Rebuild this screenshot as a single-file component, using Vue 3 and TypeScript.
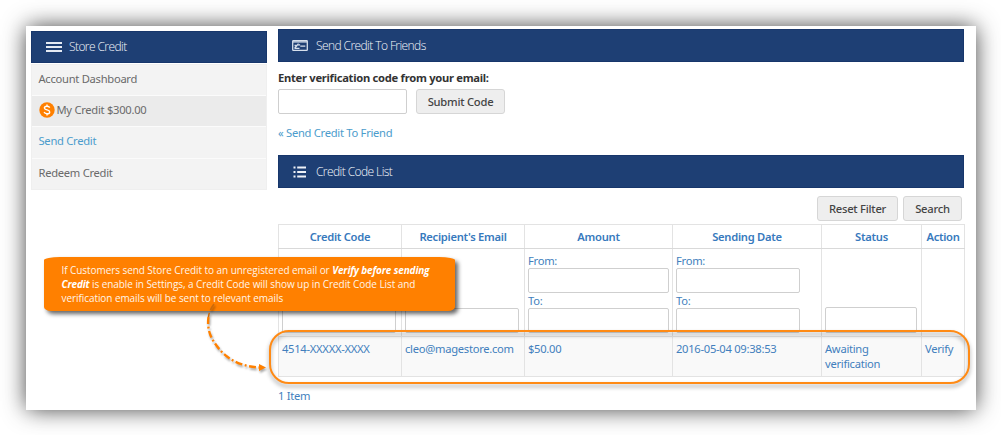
<script setup lang="ts">
interface MenuItem {
  label: string
  kind?: 'credit' | 'current'
}

interface Column {
  title: string
  filter: 'text' | 'range' | 'select' | 'none'
  value: string
}

const menu: MenuItem[] = [
  { label: 'Account Dashboard' },
  { label: 'My Credit $300.00', kind: 'credit' },
  { label: 'Send Credit', kind: 'current' },
  { label: 'Redeem Credit' },
]

const columns: Column[] = [
  { title: 'Credit Code', filter: 'text', value: '4514-XXXXX-XXXX' },
  { title: "Recipient's Email", filter: 'text', value: 'cleo@magestore.com' },
  { title: 'Amount', filter: 'range', value: '$50.00' },
  { title: 'Sending Date', filter: 'range', value: '2016-05-04 09:38:53' },
  { title: 'Status', filter: 'select', value: 'Awaiting verification' },
  { title: 'Action', filter: 'none', value: 'Verify' },
]
</script>

<template>
  <div class="stage">
    <div class="card">
      <aside class="sidebar">
        <h2 class="bar side-bar">
          <svg class="bar-icon" width="16" height="10" viewBox="0 0 16 10">
            <path d="M0 1h16M0 5h16M0 9h16" stroke="#e4eaf3" stroke-width="1.8" />
          </svg>
          <span>Store Credit</span>
        </h2>
        <ul class="menu">
          <li v-for="item in menu" :key="item.label" :class="item.kind">
            <svg v-if="item.kind === 'credit'" class="coin" width="16" height="16" viewBox="0 0 16 16">
              <circle cx="8" cy="8" r="7.700" fill="#ff8000" />
              <path d="M10.700 5.600C10.200 4.600 9.200 4.200 8 4.200c-1.500 0-2.600.7-2.600 1.800C5.400 8.500 10.700 7.300 10.700 9.900c0 1.200-1.100 1.900-2.700 1.900-1.400 0-2.500-.6-2.900-1.700M8 2.500v1.700M8 11.800v1.700" fill="none" stroke="#fff" stroke-width="1.400" />
            </svg>
            <span>{{ item.label }}</span>
          </li>
        </ul>
      </aside>

      <main class="main">
        <h2 class="bar">
          <svg class="bar-icon" width="16" height="11" viewBox="0 0 16 11">
            <rect x=".7" y=".7" width="14.600" height="9.600" rx=".6" fill="none" stroke="#d6dfec" stroke-width="1.300" />
            <path d="M1 1.900h14" stroke="#d6dfec" stroke-width="1.300" />
            <path d="M2.500 8.500 6.500 3.700M2.500 5.500h3M3.500 8.300h4M8.300 6.200h5M6.500 5.500 8 4.500" fill="none" stroke="#d6dfec" stroke-width="1.300" />
          </svg>
          <span>Send Credit To Friends</span>
        </h2>
        <label class="verify-label" for="code">Enter verification code from your email:</label>
        <div class="verify">
          <input id="code" type="text" />
          <button type="button" class="submit">Submit Code</button>
        </div>
        <a class="back">« Send Credit To Friend</a>

        <h2 class="bar list-bar">
          <svg class="bar-icon" width="16" height="12" viewBox="0 0 16 12">
            <path d="M1.500 1.500h2M5.200 1.500H14M1.500 6h2M5.200 6H14M1.500 10.500h2M5.200 10.500H14" stroke="#eef2f8" stroke-width="2" />
          </svg>
          <span>Credit Code List</span>
        </h2>
        <div class="actions">
          <button type="button" class="reset">Reset Filter</button>
          <button type="button" class="search">Search</button>
        </div>
        <table>
          <colgroup>
            <col v-for="(c, i) in columns" :key="c.title" :class="`c${i}`" />
          </colgroup>
          <thead>
            <tr>
              <th v-for="c in columns" :key="c.title">{{ c.title }}</th>
            </tr>
          </thead>
          <tbody>
            <tr class="filters">
              <td v-for="(c, i) in columns" :key="c.title">
                <div v-if="c.filter === 'range'" :class="['range', `range${i}`]">
                  <span>From:</span>
                  <input type="text" />
                  <span>To:</span>
                  <input type="text" />
                </div>
                <input v-else-if="c.filter !== 'none'" type="text" :class="c.filter" />
              </td>
            </tr>
            <tr class="entry">
              <td v-for="c in columns" :key="c.title">{{ c.value }}</td>
            </tr>
          </tbody>
        </table>
        <p class="count">1 Item</p>
      </main>
    </div>

    <div class="highlight"></div>
    <div class="callout">
      If Customers send Store Credit to an unregistered email or <b>Verify before sending</b><br />
      <b>Credit</b> is enable in Settings, a Credit Code will show up in Credit Code List and<br />
      verification emails will be sent to relevant emails
    </div>
    <svg class="arrow" width="80" height="90" viewBox="0 0 80 90">
      <path d="M19 4C16 8 14 12 13.500 17" fill="none" stroke="#c96a0c" stroke-width="1.500" stroke-dasharray="7 3" />
      <path d="M13.500 17C12 28 15 36 19 42C28 56 41 66 64 67.500" fill="none" stroke="#ff8000" stroke-width="2.400" stroke-dasharray="7 2.500 2 2.500" />
      <path d="M64 64 71 67.500 64 71Z" fill="#ff8000" />
    </svg>
  </div>
</template>

<style>
body {
  background: #fff;
  overflow: hidden;
}
</style>

<style scoped>
* {
  box-sizing: border-box;
}

.stage {
  position: relative;
  width: 1001px;
  height: 435px;
  padding: 26px 25px 25px 26px;
  overflow: hidden;
  background: #fff;
  font: 11.200px/16px "Noto Sans", "Open Sans", sans-serif;
  letter-spacing: -0.28px;
  color: #6a6a6a;
}

.card {
  display: flex;
  gap: 11px;
  width: 950px;
  height: 384px;
  padding: 3px 12px 0 5px;
  background: #fff;
  box-shadow: 0 0 22px -1px rgba(0, 0, 0, 0.78);
}

.sidebar {
  width: 236px;
  padding-top: 2px;
}

.main {
  width: 686px;
}

.bar {
  display: flex;
  align-items: center;
  gap: 7px;
  height: 32px;
  margin: 0;
  padding-left: 14px;
  background: #1e3f74;
  border: 1px solid #17366b;
  color: #f4f7fb;
  font: 300 12px/16px "Open Sans", "Noto Sans", sans-serif;
  letter-spacing: -0.58px;
  white-space: nowrap;
}

.main .bar {
  height: 33px;
  padding-left: 13px;
  gap: 8px;
}

.bar-icon {
  flex: none;
}

.menu {
  list-style: none;
  margin: 1px 0 0;
  padding: 0;
  border: 1px solid #efefef;
}

.menu li {
  display: flex;
  align-items: center;
  gap: 2px;
  height: 31.200px;
  padding: 0 7px 2px 6.500px;
  background: #f3f3f3;
  border-bottom: 1px solid #fbfbfb;
  white-space: nowrap;
}

.menu li:last-child {
  height: 30.400px;
  border-bottom: 0;
}

.menu .credit {
  background: #ebebeb;
}

.menu .current {
  color: #4b9ccc;
}

.coin {
  flex: none;
}

.verify-label {
  display: block;
  margin-top: 8px;
  color: #333;
  font-weight: 700;
  white-space: nowrap;
}

input {
  display: block;
  height: 25px;
  padding: 0;
  background: #fff;
  border: 1px solid #cfcfcf;
  border-radius: 2px;
  outline: 0;
}

button {
  height: 25px;
  padding: 0;
  background: #eee;
  border: 1px solid #d6d6d6;
  border-radius: 3px;
  color: #444;
  font: 500 11.200px/16px "Noto Sans", "Open Sans", sans-serif;
  letter-spacing: -0.23px;
  white-space: nowrap;
}

.verify {
  display: flex;
  gap: 9px;
  margin-top: 3px;
}

.verify input {
  width: 129px;
}

.submit {
  width: 89px;
}

.back {
  display: block;
  margin-top: 11px;
  color: #4b9ccc;
}

.main .list-bar {
  height: 33px;
  margin-top: 14px;
}

.actions {
  display: flex;
  justify-content: flex-end;
  gap: 5px;
  margin-top: 8px;
  padding-right: 2px;
}

.reset {
  width: 81px;
}

.search {
  width: 59px;
}

table {
  width: 686px;
  margin-top: 3px;
  border-collapse: collapse;
  table-layout: fixed;
  color: #427fbd;
}

.c0 { width: 123px; }
.c1 { width: 123px; }
.c2 { width: 148px; }
.c3 { width: 149px; }
.c4 { width: 100px; }
.c5 { width: 43px; }

th,
td {
  padding: 0 4px 0 3px;
  border: 1px solid #e3e3e3;
}

th {
  height: 24px;
  padding: 0;
  border-bottom-color: #d9d9d9;
  color: #3779bd;
  font-weight: 600;
  white-space: nowrap;
}

.filters td {
  height: 88px;
  padding-bottom: 3px;
  vertical-align: bottom;
}

.filters td > input {
  width: 114px;
}

.filters td > .select {
  width: 92px;
  height: 26px;
}

.range span {
  display: block;
  height: 15px;
  line-height: 15px;
}

.range input {
  width: 141px;
}

.range3 input {
  width: 124px;
}

.entry td {
  height: 40px;
  padding-top: 4px;
  background: #f9f9f9;
  line-height: 15px;
  vertical-align: top;
}

.count {
  margin: 11px 0 0;
  color: #427fbd;
}

.highlight {
  position: absolute;
  left: 269px;
  top: 330px;
  width: 701px;
  height: 54px;
  border: 2px solid #ff8a14;
  border-radius: 20px;
  filter: drop-shadow(0 3px 2px rgba(0, 0, 0, 0.4));
}

.callout {
  position: absolute;
  left: 44px;
  top: 257px;
  width: 411px;
  height: 54px;
  padding: 6px 0 0 17.500px;
  background: #ff8000;
  border-radius: 16px 16px 7px 7px / 3px 3px 4px 4px;
  box-shadow: 3px 3px 4px rgba(0, 0, 0, 0.6);
  color: #fff5e9;
  font: 10px/14px "Open Sans", sans-serif;
  letter-spacing: -0.07px;
  white-space: nowrap;
}

.callout b {
  color: #fff;
  font-style: italic;
  letter-spacing: -0.15px;
}

.arrow {
  position: absolute;
  left: 195px;
  top: 300px;
  filter: drop-shadow(1px 2px 1px rgba(0, 0, 0, 0.35));
}
</style>
